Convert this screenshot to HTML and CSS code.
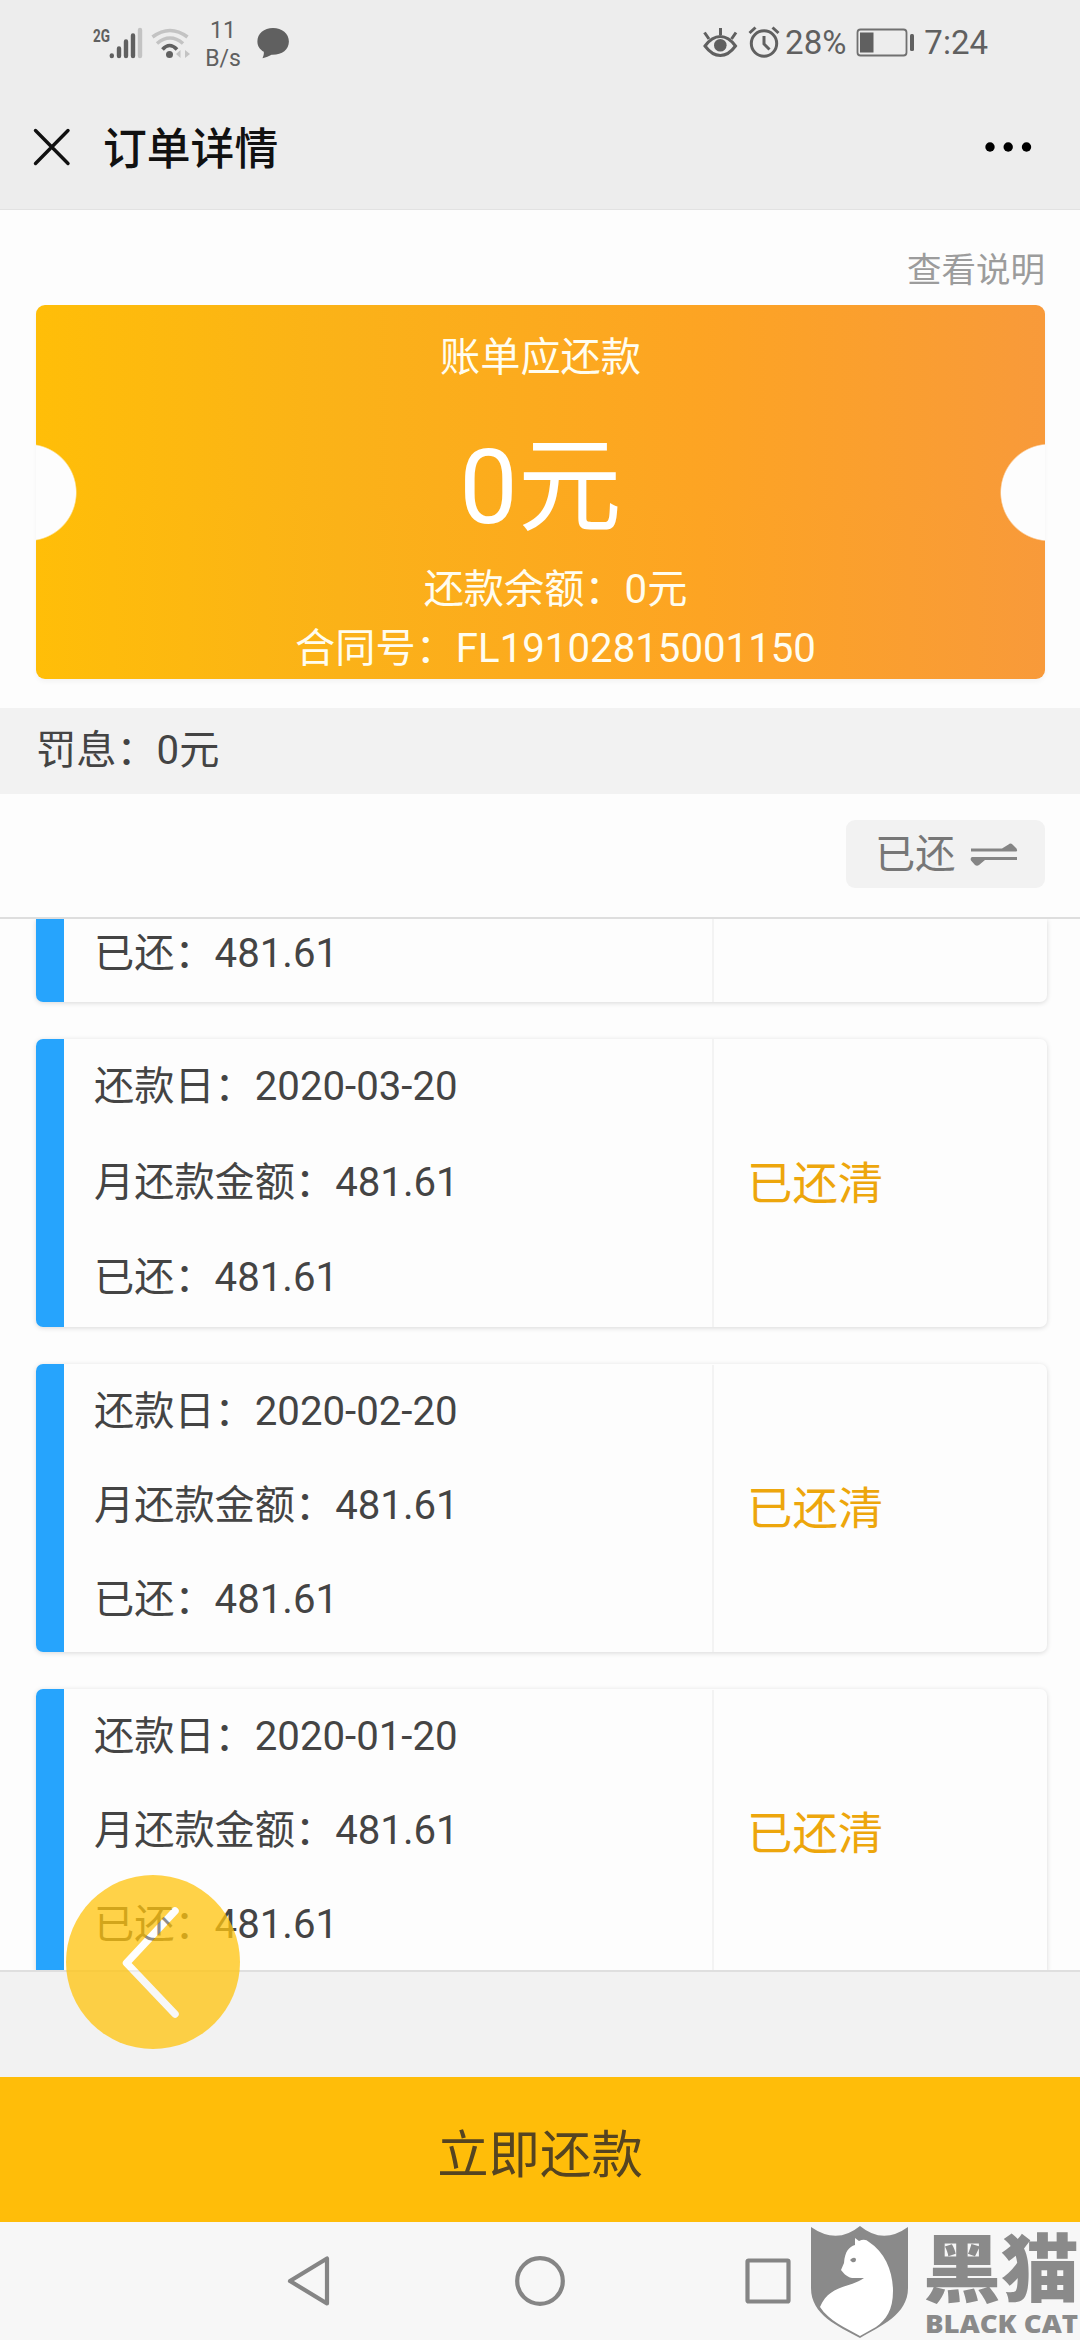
FILE: index.html
```html
<!DOCTYPE html>
<html lang="zh-CN">
<head>
<meta charset="utf-8">
<title>订单详情</title>
<link rel="stylesheet" href="styles.css">
</head>
<body>
<div class="screen">
  <header class="header">
    <div class="status">
      <div class="status-left">
        <svg class="signal" width="52" height="36" viewBox="92 24 52 36">
          <text x="93" y="41" class="net" textLength="17" lengthAdjust="spacingAndGlyphs">2G</text>
          <g stroke="#606060" stroke-width="4.4" stroke-linecap="round">
            <path d="M111.8 54.5V55M119 47.500V55M126 40.500V55M133 34.500V55"/>
            <path d="M140 29V55" stroke="#c3c3c3"/>
          </g>
        </svg>
        <svg class="wifi" width="40" height="36" viewBox="150 24 40 36" fill="none" stroke-width="3.6">
          <path d="M152.500 36Q170 23 187.500 36" stroke="#c3c3c3"/>
          <path d="M157 42.500Q170 31.500 183 42.500" stroke="#c3c3c3"/>
          <path d="M162.500 48.500Q169.500 40.500 177 48.500" stroke="#606060"/>
          <circle cx="169.500" cy="53.500" r="3.500" fill="#606060"/>
          <path d="M176 53l4.500-4v8zM190 53l-5-4v8z" fill="#c3c3c3"/>
        </svg>
        <div class="speed"><span>11</span><span>B/s</span></div>
        <svg width="34" height="34" viewBox="256 26 34 34" fill="#606060">
          <path d="M273 28c-9 0-15.600 5.700-15.600 13.500 0 4.500 2.400 8 6.400 10.300.300 2.200-.300 4.200-1.300 6.400 3.600-.600 6.500-1.800 9-3.400 10 .500 17.400-5 17.400-13.300C288.900 33.700 282 28 273 28z"/>
        </svg>
      </div>
      <div class="status-right">
        <svg width="36" height="34" viewBox="701 26 36 34" fill="none" stroke="#606060" stroke-width="3">
          <path d="M704 46Q711 36.500 719.300 36.500T734.500 46Q727.500 55.500 719.300 55.500T704 46zM719.500 35v-7M708 39l-4.500-6.500M730.500 39l4.500-6.500"/>
          <circle cx="719.300" cy="45.300" r="6.300" fill="#606060" stroke="none"/>
        </svg>
        <svg class="alarm" width="32" height="34" viewBox="747 26 32 34" fill="none" stroke="#606060" stroke-width="3">
          <circle cx="763" cy="43.500" r="12.700"/>
          <path d="M763 36v8l5.500 5.500M748.500 33l6-5.500M777.500 33l-6-5.500"/>
        </svg>
        <span class="status-text">28%</span>
        <svg class="battery" width="60" height="32" viewBox="856 27 60 32">
          <rect x="857.500" y="29.500" width="49" height="26" rx="3" fill="none" stroke="#707070" stroke-width="1.800"/>
          <rect x="860" y="32.500" width="13.500" height="20" fill="#606060"/>
          <rect x="910" y="34" width="4" height="17" rx="1.500" fill="#606060"/>
        </svg>
        <span class="status-text">7:24</span>
      </div>
    </div>
    <div class="titlebar">
      <svg width="38" height="38" viewBox="0 0 38 38" stroke="#111" stroke-width="3.400" stroke-linecap="round">
        <path d="M2.500 2.500L35 35.500M35 2.500L2.500 35.500"/>
      </svg>
      <h1>订单详情</h1>
      <svg width="48" height="12" viewBox="0 0 48 12" fill="#000">
        <circle cx="6" cy="6" r="4.700"/><circle cx="24.200" cy="6" r="4.700"/><circle cx="42.500" cy="6" r="4.700"/>
      </svg>
    </div>
  </header>

  <section class="summary">
    <a class="help">查看说明</a>
    <div class="ticket">
      <div class="due-label">账单应还款</div>
      <div class="due">0元</div>
      <div class="line balance">还款余额：0元</div>
      <div class="line">合同号：FL19102815001150</div>
    </div>
  </section>

  <div class="penalty">罚息：0元</div>

  <div class="filter">
    <button class="toggle">已还
      <svg width="48" height="24" viewBox="970 845 48 24" fill="#858585">
        <path d="M971 850.500H1002L1008.500 846.500Q1010.500 844.500 1012.500 846.500L1016.500 850.500Q1018 853.500 1016 853.500H971zM1017 859V862H985L979 867Q977 868.500 975 867L971 862.500Q970 860 972 859z"/>
      </svg>
    </button>
  </div>

  <main class="list">
    <article class="bill partial">
      <div class="info"><p>已还：481.61</p></div>
    </article>
    <article class="bill loose">
      <div class="info"><p>还款日：2020-03-20</p><p>月还款金额：481.61</p><p>已还：481.61</p></div>
      <div class="state">已还清</div>
    </article>
    <article class="bill">
      <div class="info"><p>还款日：2020-02-20</p><p>月还款金额：481.61</p><p>已还：481.61</p></div>
      <div class="state">已还清</div>
    </article>
    <article class="bill">
      <div class="info"><p>还款日：2020-01-20</p><p>月还款金额：481.61</p><p>已还：481.61</p></div>
      <div class="state">已还清</div>
    </article>
  </main>

  <div class="spacer"></div>
  <button class="pay">立即还款</button>

  <nav class="nav">
    <svg width="46" height="52" viewBox="0 0 46 52"><path d="M4 26L41 3.500V48.500z"/></svg>
    <svg width="52" height="52" viewBox="0 0 52 52"><circle cx="26" cy="26" r="22.800"/></svg>
    <svg width="48" height="52" viewBox="0 0 48 52"><rect x="3.500" y="5.500" width="41" height="41" rx="1"/></svg>
  </nav>

  <svg class="fab" viewBox="66 1875 174 174">
    <mask id="chevron">
      <rect x="66" y="1875" width="174" height="174" fill="#fff"/>
      <path d="M175 1911L126.500 1963L175 2014" fill="none" stroke="#000" stroke-width="7.500" stroke-linecap="round" stroke-linejoin="round"/>
    </mask>
    <path d="M175 1911L126.500 1963L175 2014" fill="none" stroke="#fff" stroke-opacity=".4" stroke-width="7.500" stroke-linecap="round" stroke-linejoin="round"/>
    <circle cx="153" cy="1962" r="87" fill="#ffc40e" fill-opacity=".76" mask="url(#chevron)"/>
  </svg>

  <svg class="brand" width="274" height="120" viewBox="806 2220 274 120">
    <path d="M811 2227Q837 2245 860 2226Q883 2245 908 2227V2288C908 2315 880 2326 860 2338C838 2326 811 2315 811 2288z" fill="#8a8a8a"/>
    <path d="M855 2238L859 2241Q865 2238 869 2242C885 2252 893 2272 893 2291C893 2310 886 2320 876 2327L860 2336C846 2328 829 2321 820 2307C829 2285 850 2288 864 2278H852C846 2277 843 2272 841 2270L844 2263C845 2251 849 2247 855 2245z" fill="#fff"/>
    <path d="M850 2260Q854 2256 856 2259Q856 2263 852 2262z" fill="#8a8a8a"/>
    <text class="brand-cn" x="923" y="2296" textLength="156" lengthAdjust="spacingAndGlyphs">黑猫</text>
    <text class="brand-en" x="925" y="2333" textLength="153" lengthAdjust="spacingAndGlyphs">BLACK CAT</text>
  </svg>
</div>
</body>
</html>
```

FILE: styles.css
```css
* { box-sizing: border-box; margin: 0; padding: 0; }

body {
  width: 1080px;
  height: 2340px;
  overflow: hidden;
  background: #fdfdfd;
  color: #444;
  font: 40.2px/1 Roboto, "Noto Sans CJK SC", sans-serif;
}

svg { display: block; flex: none; }
button { border: 0; font: inherit; color: inherit; }

.screen { position: relative; height: 2340px; display: flex; flex-direction: column; }
.screen > * { flex: none; }

/* Header */
.header { height: 210px; background: #ededed; border-bottom: 1px solid #e2e2e2; }
.status { height: 86px; display: flex; justify-content: space-between; align-items: center; padding: 0 92px; color: #606060; }
.status-left, .status-right { display: flex; align-items: center; }
.status-left { height: 84px; }
.net { font: 700 19px Roboto, sans-serif; fill: #606060; }
.wifi { margin-left: 6px; }
.speed { width: 66px; display: flex; flex-direction: column; align-items: center; font-size: 23px; line-height: 27.5px; padding-top: 3px; }
.alarm { margin: 0 5px 0 10px; }
.status-text { font-size: 33px; line-height: 40px; }
.battery { margin: 0 8px 0 10px; }
.titlebar { display: flex; align-items: center; height: 122px; padding: 0 48px 0 33px; }
.titlebar h1 { flex: 1; margin: 6px 0 0 32px; font-size: 43.8px; font-weight: 500; color: #111; line-height: 60px; }

/* Summary ticket */
.summary { height: 498px; padding: 35px 35px 0 36px; display: flex; flex-direction: column; }
.help { align-self: flex-end; font-size: 34.5px; line-height: 50px; color: #9c9c9c; height: 60px; }
.ticket {
  height: 374px;
  border-radius: 9px;
  color: #fffdf0;
  text-align: center;
  background:
    radial-gradient(circle 49px at -8px 187.5px, #fdfdfd 47.5px, transparent 49px),
    radial-gradient(circle 49px at 1013px 187.5px, #fdfdfd 47.5px, transparent 49px),
    linear-gradient(90deg, #ffbe08, #fbb218 30%, #fda423 66%, #f89a3a);
  box-shadow: 0 3px 5px rgba(0, 0, 0, .04);
}
.due-label { line-height: 60px; padding-top: 23px; }
.due { font-size: 104px; line-height: 120px; padding-top: 40px; color: #fff; }
.line { line-height: 59px; padding-left: 30px; }
.balance { padding-top: 12px; }

.penalty { height: 86px; line-height: 85px; padding-left: 36px; background: #f2f2f2; }
.filter { height: 125px; padding: 26px 35px 0; display: flex; justify-content: flex-end; align-items: flex-start; border-bottom: 2px solid #dedede; }
.toggle { width: 199px; height: 68px; border-radius: 9px; background: #f2f2f2; color: #777; display: flex; align-items: center; padding: 2px 0 0 29px; gap: 15px; line-height: 64px; white-space: nowrap; }

/* Bill list */
.list { height: 1051px; overflow: hidden; padding: 0 33px 0 36px; display: flex; flex-direction: column; gap: 37px; }
.bill { flex: none; height: 288px; display: grid; grid-template-columns: 650px 1fr; border-left: 28px solid #26a4fd; border-radius: 7px; padding-top: 1px; box-shadow: 0 1px 5px rgba(0, 0, 0, .15); }
.info { padding-left: 30px; border-right: 2px solid #f3f3f3; --row: 94px; }
.loose .info { --row: 95.6px; margin-top: -1px; }
.info p { height: var(--row); line-height: var(--row); white-space: nowrap; }
.partial { height: 83px; padding-top: 0; border-radius: 0 0 7px 7px; }
.partial .info { --row: 69px; }
.state { padding-left: 33px; align-self: center; font-size: 45.4px; line-height: 60px; color: #eda60c; padding-top: 3px; }

/* Footer */
.spacer { height: 107px; background: #f2f2f2; border-top: 2px solid #dfdfdf; }
.pay { height: 145px; background: #ffbd09; color: #554421; font-size: 51.4px; line-height: 60px; padding-top: 13px; }
.nav { height: 118px; background: #f7f7f7; display: flex; align-items: center; padding-left: 286px; gap: 182px; }
.nav svg { fill: none; stroke: #858585; stroke-width: 4.2; stroke-linejoin: round; }
.nav svg:nth-child(3) { margin-left: -4px; }

/* Floating overlays */
.fab { position: absolute; left: 66px; top: 1875px; width: 174px; height: 174px; }
.brand { position: absolute; right: 0; bottom: 0; fill: #8a8a8a; }
.brand-cn { font: 900 74px "Noto Sans CJK SC", sans-serif; }
.brand-en { font: 800 24px "Open Sans", sans-serif; }
```
